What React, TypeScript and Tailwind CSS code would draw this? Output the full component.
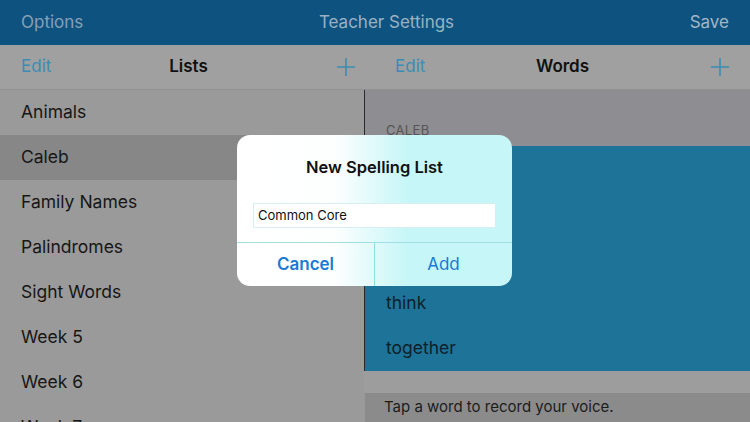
import React from "react";

const lists = ["Animals", "Caleb", "Family Names", "Palindromes", "Sight Words", "Week 5", "Week 6", "Week 7"];
const words = ["", "", "", "think", "together"];

function Plus() {
  return (
    <svg width="20" height="20" viewBox="0 0 20 20" className="text-[#3a8db4]">
      <path d="M10 1v18M1 10h18" stroke="currentColor" strokeWidth="1.6" />
    </svg>
  );
}

export default function App() {
  return (
    <div
      className="relative w-[750px] h-[422px] overflow-hidden bg-[#9a9a9a]"
      style={{ fontFamily: 'Inter, "Liberation Sans", sans-serif' }}
    >
      {/* top bar */}
      <div className="h-[45px] bg-[#0e5380] flex items-center justify-between px-[21px] text-[17px]">
        <span className="text-[#86a0b5]">Options</span>
        <span className="text-[#9bb1c2]">Teacher Settings</span>
        <span className="text-[#a4b6c5]">Save</span>
      </div>

      <div className="flex h-[377px]">
        {/* left column */}
        <div className="w-[364px] flex flex-col overflow-hidden">
          <div className="h-[45px] shrink-0 bg-[#a0a0a0] border-b border-[#8f8f8f] flex items-center justify-between pl-[21px] pr-[8px] text-[17px]">
            <span className="text-[#3a8db4] w-[60px]">Edit</span>
            <span className="font-semibold text-[#111]">Lists</span>
            <span className="w-[60px] flex justify-end">
              <Plus />
            </span>
          </div>
          {lists.map((l) => (
            <div
              key={l}
              className={`h-[45px] shrink-0 flex items-center pl-[21px] text-[17.5px] text-[#161616] ${l === "Caleb" ? "bg-[#878787]" : ""}`}
            >
              {l}
            </div>
          ))}
        </div>

        {/* right column */}
        <div className="flex-1 flex flex-col">
          <div className="h-[45px] shrink-0 bg-[#a0a0a0] border-b border-[#8f8f8f] flex items-center justify-between pl-[31px] pr-[20px] text-[17px]">
            <span className="text-[#3a8db4] w-[60px]">Edit</span>
            <span className="font-semibold text-[#111]">Words</span>
            <span className="w-[60px] flex justify-end">
              <Plus />
            </span>
          </div>
          <div className="border-l border-[#2a2a2a] h-[281px] shrink-0 flex flex-col">
            <div className="h-[56px] bg-[#8e8d92] flex items-end pl-[21px] pb-[6px] text-[13px] text-[#555] tracking-wide">
              CALEB
            </div>
            <div className="flex-1 bg-[#1e7398]">
              {words.map((w, i) => (
                <div key={i} className="h-[45px] flex items-center pl-[21px] text-[17.5px] text-[#0d1f2a]">
                  {w}
                </div>
              ))}
            </div>
          </div>
          <div className="h-[22px] shrink-0 bg-[#9d9d9d]" />
          <div className="flex-1 bg-[#8b8b8b] ml-[1px] flex items-center pl-[19px] text-[15px] text-[#1c1c1c]">
            Tap a word to record your voice.
          </div>
        </div>
      </div>

      {/* alert */}
      <div className="absolute left-[237px] top-[135px] w-[275px] h-[151px] rounded-[13px] overflow-hidden bg-[linear-gradient(90deg,#ffffff_0%,#fdfefe_36%,#c6f6f7_62%,#c6f6f7_100%)] flex flex-col">
        <div className="pt-[20px] text-center text-[16.5px] font-semibold text-[#111]">New Spelling List</div>
        <div className="px-[16px] mt-[23px]">
          <div className="h-[25px] bg-white border border-[#d8eef0] flex items-center pl-[4px] text-[13px] text-[#111]">
            Common Core
          </div>
        </div>
        <div className="mt-auto h-[44px] border-t border-[#9fdfe4] flex text-[17px]">
          <div className="w-[138px] flex items-center justify-center font-semibold text-[#1a7ad4] border-r border-[#8fdde4]">
            Cancel
          </div>
          <div className="flex-1 flex items-center justify-center text-[#1a7ad4]">Add</div>
        </div>
      </div>
    </div>
  );
}
